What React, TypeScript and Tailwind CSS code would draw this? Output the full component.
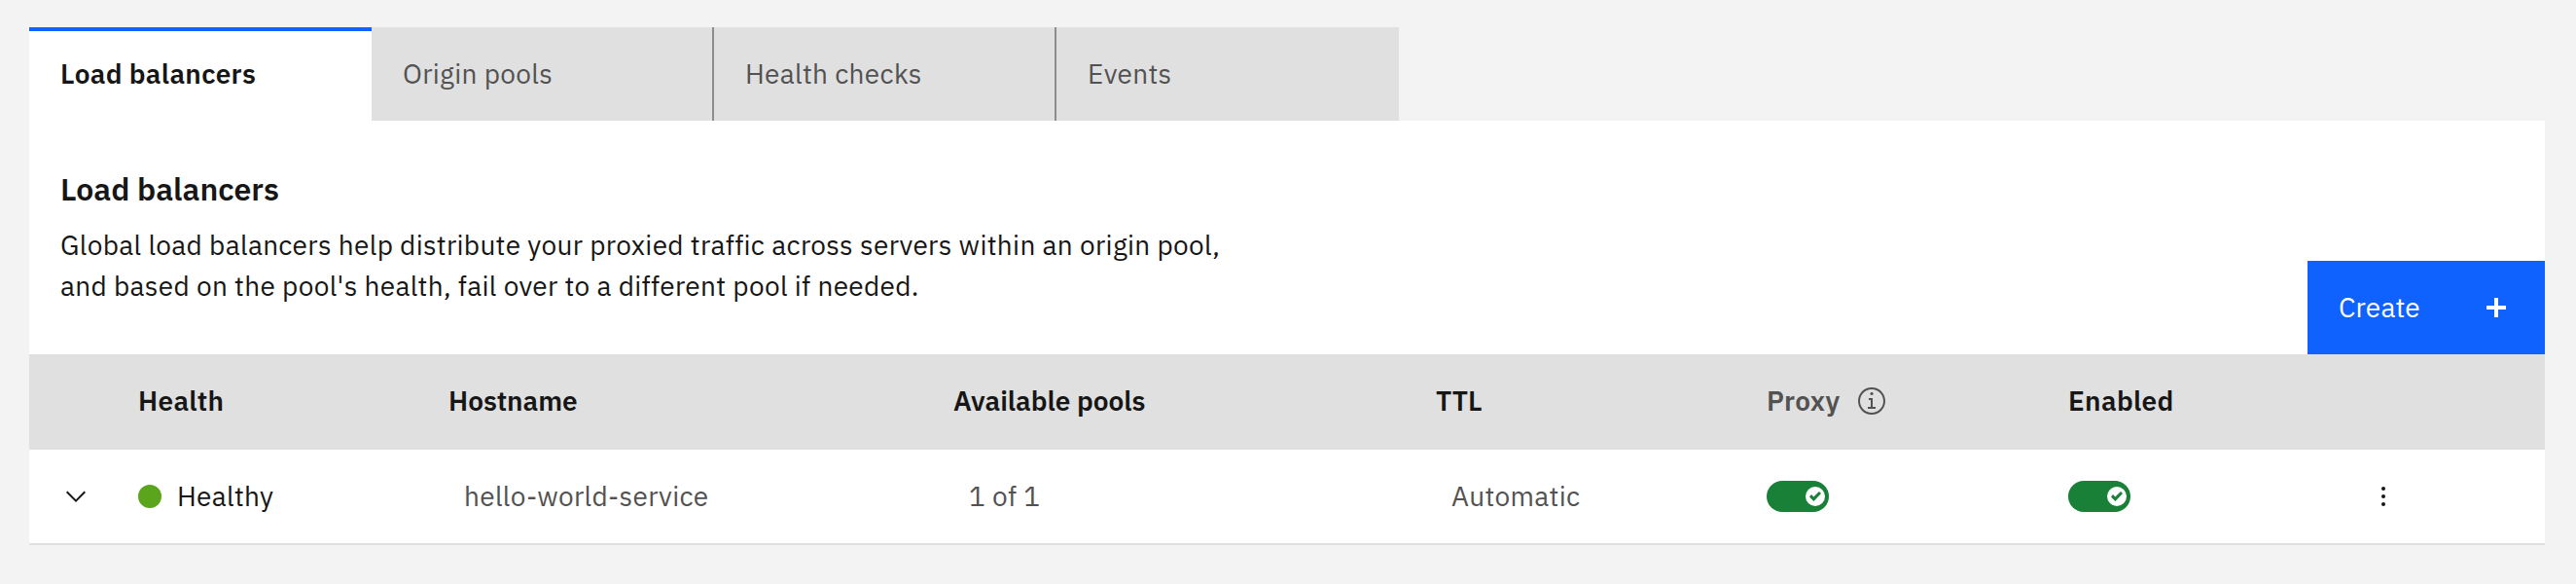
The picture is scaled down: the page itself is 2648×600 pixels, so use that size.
import type { ReactNode } from "react";

const tabs = [
  { label: "Origin pools", className: "w-[350px]" },
  { label: "Health checks", className: "w-[352px] border-l-2 border-[#8d8d8d]" },
  { label: "Events", className: "w-[354px] border-l-2 border-[#8d8d8d]" },
];

function Toggle() {
  return (
    <div className="flex h-8 w-16 items-center justify-end rounded-full bg-[#198038] pr-1">
      <div className="flex size-5 items-center justify-center rounded-full bg-white">
        <svg className="h-[10px] w-3" viewBox="0 0 6 5" fill="#198038">
          <path d="M2.2 2.7L5 0 6 1 2.2 5 0 2.7 1 1.5z" />
        </svg>
      </div>
    </div>
  );
}

function Cell({ className, children }: { className: string; children?: ReactNode }) {
  return <div className={`flex shrink-0 items-center ${className}`}>{children}</div>;
}

export default function App() {
  return (
    <div className="min-h-[600px] bg-[#f3f3f3] pt-7 pr-8 pl-[30px] font-['IBM_Plex_Sans',Roboto,sans-serif] text-[28px] leading-9 tracking-[0.32px] text-[#161616]">
      <nav className="flex h-24 w-[1408px]">
        <div className="flex w-[352px] items-center border-t-4 border-[#0f62fe] bg-white pb-1 pl-8 font-semibold">
          Load balancers
        </div>
        {tabs.map((tab) => (
          <div
            key={tab.label}
            className={`flex items-center bg-[#e0e0e0] pl-8 text-[#525252] ${tab.className}`}
          >
            {tab.label}
          </div>
        ))}
      </nav>

      <section className="flex h-60 items-end justify-between bg-white">
        <div className="flex h-full flex-col pt-[49px] pl-8">
          <h2 className="text-[32px] leading-[42px] font-semibold tracking-normal">Load balancers</h2>
          <p className="mt-4 leading-[42px]">
            Global load balancers help distribute your proxied traffic across servers within an origin pool,
            <br />
            and based on the pool's health, fail over to a different pool if needed.
          </p>
        </div>
        <button className="flex h-24 w-[244px] items-center justify-between bg-[#0f62fe] pr-[34px] pl-8 tracking-[0.16px] text-white">
          Create
          <svg className="size-8" viewBox="0 0 16 16" fill="currentColor">
            <path d="M9 7V3H7v4H3v2h4v4h2V9h4V7z" />
          </svg>
        </button>
      </section>

      <section>
        <div className="flex h-[98px] items-center border-b-2 border-[#e0e0e0] bg-[#e0e0e0] pl-28 font-semibold">
          <Cell className="w-[319px]">Health</Cell>
          <Cell className="w-[519px] tracking-normal">Hostname</Cell>
          <Cell className="w-[496px] tracking-normal">Available pools</Cell>
          <Cell className="w-[340px] tracking-normal">TTL</Cell>
          <Cell className="w-[310px] text-[#525252]">
            <span className="w-[92px]">Proxy</span>
            <svg className="size-8" viewBox="0 0 16 16" fill="currentColor">
              <path d="M8.5 11V6.5h-2v1h1V11H6v1h4v-1zM8 3.5c-.4 0-.8.3-.8.8S7.600 5 8 5s.8-.3.8-.8S8.400 3.500 8 3.500z" />
              <path d="M8 15c-3.900 0-7-3.100-7-7s3.100-7 7-7 7 3.100 7 7-3.100 7-7 7zM8 2C4.700 2 2 4.700 2 8s2.700 6 6 6 6-2.700 6-6-2.700-6-6-6z" />
            </svg>
          </Cell>
          <Cell className="w-[320px]">Enabled</Cell>
        </div>
        <div className="flex h-[98px] items-center border-b-2 border-[#e0e0e0] bg-white text-[#525252]">
          <Cell className="w-28 pl-8">
            <svg className="size-8 text-[#161616]" viewBox="0 0 16 16" fill="currentColor">
              <path d="M8 11L3 6l.7-.7L8 9.600l4.300-4.300.7.700z" />
            </svg>
          </Cell>
          <Cell className="w-[335px] text-[#161616]">
            <span className="mr-4 size-6 rounded-full bg-[#5aa51c]" />
            Healthy
          </Cell>
          <Cell className="w-[519px]">hello-world-service</Cell>
          <Cell className="w-[496px]">1 of 1</Cell>
          <Cell className="w-[324px]">Automatic</Cell>
          <Cell className="w-[310px]">
            <Toggle />
          </Cell>
          <Cell className="w-[308px]">
            <Toggle />
          </Cell>
          <svg className="size-8 text-[#161616]" viewBox="0 0 16 16" fill="currentColor">
            <circle cx="8" cy="4" r="1" />
            <circle cx="8" cy="8" r="1" />
            <circle cx="8" cy="12" r="1" />
          </svg>
        </div>
      </section>
    </div>
  );
}
